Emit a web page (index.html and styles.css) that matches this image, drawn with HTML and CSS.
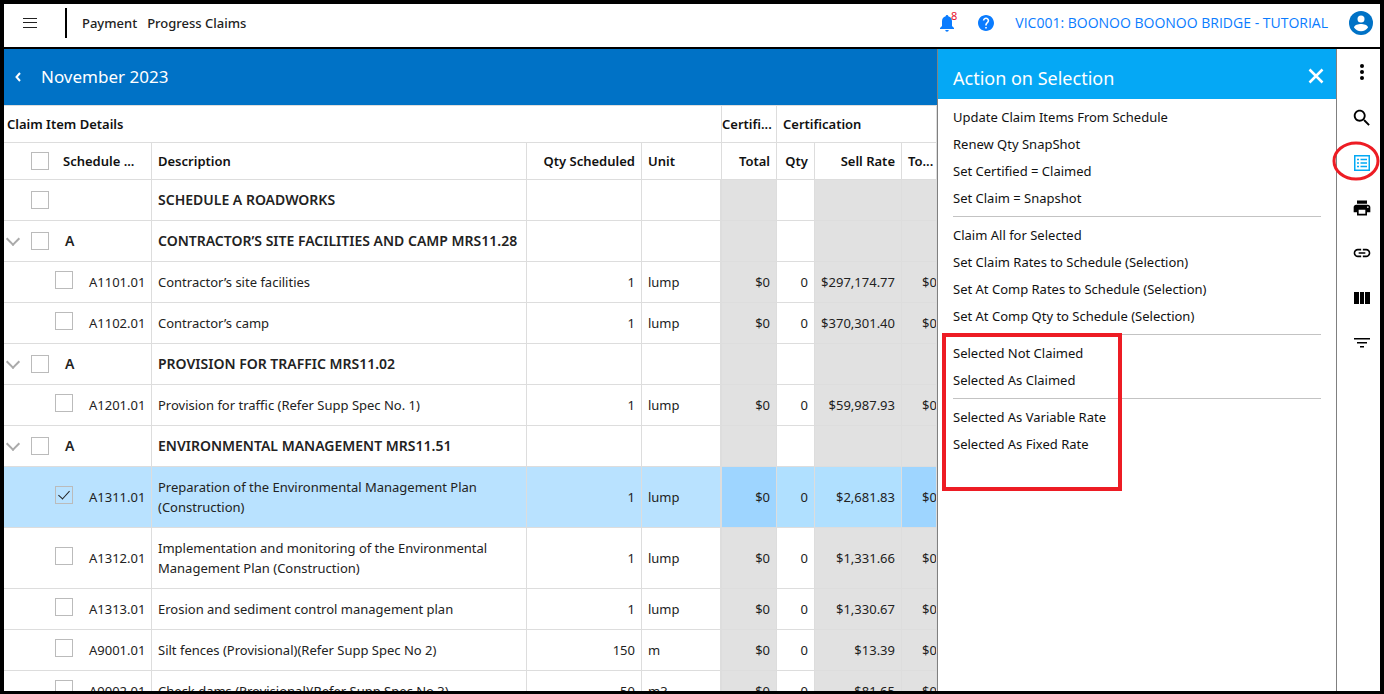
FILE: index.html
```html
<!DOCTYPE html>
<html lang="en">
<head>
  <meta charset="UTF-8" />
  <meta name="viewport" content="width=device-width, initial-scale=1.0" />
  <title>Progress Claims</title>
  <link rel="stylesheet" href="styles.css">
</head>
<body>
  <header class="topbar">
    <button class="icon-btn menu-btn" aria-label="Menu">
      <svg width="14" height="10" viewBox="0 0 14 10" stroke="#222" stroke-width="1"><path d="M0 .5h14M0 4.500h14M0 9.500h14"/></svg>
    </button>
    <nav class="crumbs">
      <a href="#">Payment</a>
      <a href="#">Progress Claims</a>
    </nav>
    <div class="top-right">
      <button class="icon-btn bell" aria-label="Notifications">
        <svg width="16" height="17" viewBox="0 0 16 17" fill="#0a7cff"><path d="M8 0c.9 0 1.300.6 1.300 1.300C11.700 1.900 13 3.900 13 6.300V11l2 2v1H1v-1l2-2V6.300c0-2.400 1.300-4.400 3.700-5C6.700.6 7.100 0 8 0zM6.300 15h3.400c0 1-.7 1.700-1.700 1.700S6.300 16 6.300 15z"/></svg>
        <span class="badge">8</span>
      </button>
      <button class="icon-btn" aria-label="Help">
        <svg width="16" height="16" viewBox="2 2 20 20" fill="#0a7cff"><path d="M12 2C6.480 2 2 6.480 2 12s4.480 10 10 10 10-4.480 10-10S17.520 2 12 2zm1 17h-2v-2h2v2zm2.070-7.750l-.9.920C13.450 12.900 13 13.500 13 15h-2v-.5c0-1.100.45-2.100 1.170-2.830l1.240-1.260c.37-.36.59-.86.59-1.410 0-1.100-.9-2-2-2s-2 .9-2 2H8c0-2.210 1.790-4 4-4s4 1.790 4 4c0 .88-.36 1.680-.93 2.250z"/></svg>
      </button>
      <a class="project" href="#">VIC001: BOONOO BOONOO BRIDGE - TUTORIAL</a>
      <button class="icon-btn" aria-label="Account">
        <svg width="24" height="24" viewBox="0 0 24 24"><circle cx="12" cy="12" r="12" fill="#0072c6"/><circle cx="12" cy="8" r="3.500" fill="#fff"/><path d="M5 16.500c0-2.500 4.600-3.500 7-3.500s7 1 7 3.500c-1.500 2.300-4 3.700-7 3.700s-5.500-1.400-7-3.700z" fill="#fff"/></svg>
      </button>
    </div>
  </header>

  <div class="layout">
    <main class="claims">
      <div class="period">
        <button class="icon-btn" aria-label="Back">
          <svg width="6" height="10" viewBox="0 0 6 10" fill="none" stroke="#fff" stroke-width="2"><path d="M5 1L1.500 5 5 9"/></svg>
        </button>
        <h1>November 2023</h1>
      </div>

      <table class="grid">
        <colgroup>
          <col class="c-code"><col><col class="c-sched"><col class="c-unit"><col class="c-total"><col class="c-qty"><col class="c-rate"><col class="c-last">
        </colgroup>
        <thead>
          <tr class="bands">
            <th colspan="4">Claim Item Details</th>
            <th class="num cut">Certifi...</th>
            <th colspan="3">Certification</th>
          </tr>
          <tr>
            <th><div class="node"><input type="checkbox" aria-label="Select all"><span class="sched">Schedule ...</span></div></th>
            <th>Description</th>
            <th class="num">Qty Scheduled</th>
            <th>Unit</th>
            <th class="num">Total</th>
            <th class="num">Qty</th>
            <th class="num">Sell Rate</th>
            <th class="last">To...</th>
          </tr>
        </thead>
        <tbody>
          <tr class="group">
            <td><div class="node"><input type="checkbox" aria-label="Select Schedule A"></div></td>
            <td>SCHEDULE A ROADWORKS</td><td></td><td></td><td></td><td></td><td></td><td></td>
          </tr>
          <tr class="group">
            <td><div class="node open"><input type="checkbox" id="g1"><label for="g1">A</label></div></td>
            <td>CONTRACTOR’S SITE FACILITIES AND CAMP MRS11.28</td><td></td><td></td><td></td><td></td><td></td><td></td>
          </tr>
          <tr>
            <td><div class="node leaf"><input type="checkbox" id="i1"><label for="i1">A1101.01</label></div></td>
            <td>Contractor’s site facilities</td><td>1</td><td>lump</td><td>$0</td><td>0</td><td>$297,174.77</td><td>$0</td>
          </tr>
          <tr>
            <td><div class="node leaf"><input type="checkbox" id="i2"><label for="i2">A1102.01</label></div></td>
            <td>Contractor’s camp</td><td>1</td><td>lump</td><td>$0</td><td>0</td><td>$370,301.40</td><td>$0</td>
          </tr>
          <tr class="group">
            <td><div class="node open"><input type="checkbox" id="g2"><label for="g2">A</label></div></td>
            <td>PROVISION FOR TRAFFIC MRS11.02</td><td></td><td></td><td></td><td></td><td></td><td></td>
          </tr>
          <tr>
            <td><div class="node leaf"><input type="checkbox" id="i3"><label for="i3">A1201.01</label></div></td>
            <td>Provision for traffic (Refer Supp Spec No. 1)</td><td>1</td><td>lump</td><td>$0</td><td>0</td><td>$59,987.93</td><td>$0</td>
          </tr>
          <tr class="group">
            <td><div class="node open"><input type="checkbox" id="g3"><label for="g3">A</label></div></td>
            <td>ENVIRONMENTAL MANAGEMENT MRS11.51</td><td></td><td></td><td></td><td></td><td></td><td></td>
          </tr>
          <tr class="selected">
            <td><div class="node leaf"><input type="checkbox" id="i4" checked><label for="i4">A1311.01</label></div></td>
            <td>Preparation of the Environmental Management Plan (Construction)</td><td>1</td><td>lump</td><td>$0</td><td>0</td><td>$2,681.83</td><td>$0</td>
          </tr>
          <tr>
            <td><div class="node leaf"><input type="checkbox" id="i5"><label for="i5">A1312.01</label></div></td>
            <td>Implementation and monitoring of the Environmental Management Plan (Construction)</td><td>1</td><td>lump</td><td>$0</td><td>0</td><td>$1,331.66</td><td>$0</td>
          </tr>
          <tr>
            <td><div class="node leaf"><input type="checkbox" id="i6"><label for="i6">A1313.01</label></div></td>
            <td>Erosion and sediment control management plan</td><td>1</td><td>lump</td><td>$0</td><td>0</td><td>$1,330.67</td><td>$0</td>
          </tr>
          <tr>
            <td><div class="node leaf"><input type="checkbox" id="i7"><label for="i7">A9001.01</label></div></td>
            <td>Silt fences (Provisional)(Refer Supp Spec No 2)</td><td>150</td><td>m</td><td>$0</td><td>0</td><td>$13.39</td><td>$0</td>
          </tr>
          <tr>
            <td><div class="node leaf"><input type="checkbox" id="i8"><label for="i8">A9002.01</label></div></td>
            <td>Check dams (Provisional)(Refer Supp Spec No 3)</td><td>50</td><td>m3</td><td>$0</td><td>0</td><td>$81.65</td><td>$0</td>
          </tr>
        </tbody>
      </table>
    </main>

    <aside class="panel">
      <div class="panel-head">
        <h2>Action on Selection</h2>
        <button class="icon-btn" aria-label="Close">
          <svg width="16" height="16" viewBox="0 0 16 16" stroke="#fff" stroke-width="2.500"><path d="M1.500 1.500l13 13M14.500 1.500l-13 13"/></svg>
        </button>
      </div>
      <div class="actions">
        <div class="action-group">
          <button>Update Claim Items From Schedule</button>
          <button>Renew Qty SnapShot</button>
          <button>Set Certified = Claimed</button>
          <button>Set Claim = Snapshot</button>
        </div>
        <div class="action-group">
          <button>Claim All for Selected</button>
          <button>Set Claim Rates to Schedule (Selection)</button>
          <button>Set At Comp Rates to Schedule (Selection)</button>
          <button>Set At Comp Qty to Schedule (Selection)</button>
        </div>
        <div class="action-group">
          <button>Selected Not Claimed</button>
          <button>Selected As Claimed</button>
        </div>
        <div class="action-group">
          <button>Selected As Variable Rate</button>
          <button>Selected As Fixed Rate</button>
        </div>
        <div class="mark-box"></div>
      </div>
    </aside>

    <div class="rail">
      <button class="icon-btn" aria-label="More">
        <svg width="24" height="24" viewBox="0 0 24 24"><circle cx="12" cy="6" r="2"/><circle cx="12" cy="12" r="2"/><circle cx="12" cy="18" r="2"/></svg>
      </button>
      <button class="icon-btn" aria-label="Search">
        <svg width="22" height="22" viewBox="0 0 24 24"><path d="M15.500 14h-.79l-.28-.27C15.410 12.590 16 11.110 16 9.500 16 5.910 13.090 3 9.500 3S3 5.910 3 9.500 5.910 16 9.500 16c1.610 0 3.090-.59 4.230-1.570l.27.28v.79l5 4.990L20.490 19l-4.990-5zm-6 0C7.010 14 5 11.990 5 9.500S7.010 5 9.500 5 14 7.010 14 9.500 11.990 14 9.500 14z"/></svg>
      </button>
      <button class="icon-btn marked" aria-label="Actions">
        <svg width="16" height="16" viewBox="0 0 16 16" fill="none" stroke="#03a9f4"><path d="M.75.75h14.500v14.500H.75z" stroke-width="1.500"/><path d="M3 4.500h2M6.500 4.500H13M3 8h2M6.500 8H13M3 11.500h2M6.500 11.500H13" stroke-width="1.500"/></svg>
        <svg class="mark-ring" width="48" height="40" viewBox="0 0 48 40" fill="none" stroke="#ed1c24" stroke-width="3"><ellipse cx="24" cy="20" rx="22" ry="18"/></svg>
      </button>
      <button class="icon-btn" aria-label="Print">
        <svg width="20" height="20" viewBox="0 0 24 24"><path d="M19 8H5c-1.660 0-3 1.340-3 3v6h4v4h12v-4h4v-6c0-1.660-1.340-3-3-3zm-3 11H8v-5h8v5zm3-7c-.55 0-1-.45-1-1s.45-1 1-1 1 .45 1 1-.45 1-1 1zm-1-9H6v4h12V3z"/></svg>
      </button>
      <button class="icon-btn" aria-label="Link">
        <svg width="20" height="20" viewBox="0 0 24 24"><path d="M3.900 12c0-1.710 1.390-3.100 3.100-3.100h4V7H7c-2.760 0-5 2.240-5 5s2.240 5 5 5h4v-1.900H7c-1.710 0-3.100-1.390-3.100-3.100zM8 13h8v-2H8v2zm9-6h-4v1.900h4c1.710 0 3.100 1.390 3.100 3.100s-1.390 3.100-3.100 3.100h-4V17h4c2.760 0 5-2.240 5-5s-2.240-5-5-5z"/></svg>
      </button>
      <button class="icon-btn" aria-label="Columns">
        <svg width="16" height="12" viewBox="0 0 16 12"><path d="M0 0h5v12H0zM6 0h4v12H6zM11 0h5v12h-5z"/></svg>
      </button>
      <button class="icon-btn" aria-label="Filter">
        <svg width="16" height="10" viewBox="0 0 16 10"><path d="M0 0h16v1.500H0zM3 4h10v1.500H3zM6 8h4v1.500H6z"/></svg>
      </button>
    </div>
  </div>
</body>
</html>
```
FILE: styles.css
```css
* {
  box-sizing: border-box;
}
body {
  margin: 0;
  height: 100vh;
  display: flex;
  flex-direction: column;
  overflow: hidden;
  border: 4px solid #000;
  border-bottom-width: 3px;
  background: #fff;
  color: #222;
  font-family: "Noto Sans", "Open Sans", sans-serif;
  font-size: 13px;
  line-height: 20px;
}
h1, h2 {
  margin: 0;
  font-weight: 400;
  color: #fff;
}
h1 {
  font-size: 17px;
}
h2 {
  font-size: 18px;
}
a {
  text-decoration: none;
  color: inherit;
}
button {
  padding: 0;
  border: none;
  background: none;
  font: inherit;
  color: inherit;
  cursor: pointer;
}
svg {
  display: block;
}
.icon-btn {
  position: relative;
  display: flex;
  align-items: center;
  justify-content: center;
}

/* top bar */
.topbar {
  flex: none;
  display: flex;
  align-items: center;
  height: 45px;
  padding: 0 7px 5px 0;
  border-bottom: 2px solid #000;
  font-weight: 500;
}
.menu-btn {
  width: 52px;
  height: 30px;
}
.crumbs {
  display: flex;
  gap: 10px;
  margin-left: 9px;
  padding: 5px 0 5px 15px;
  border-left: 2px solid #000;
}
.top-right {
  display: flex;
  align-items: center;
  gap: 21px;
  margin-left: auto;
}
.bell {
  margin-right: 2px;
}
.badge {
  position: absolute;
  top: -5px;
  right: -2px;
  color: #e8112d;
  font-size: 11px;
  font-weight: 400;
  line-height: 12px;
}
.project {
  color: #0a7cff;
  font-family: "Open Sans", "Noto Sans", sans-serif;
  font-size: 14px;
  font-weight: 400;
}

.layout {
  flex: 1;
  display: flex;
  min-height: 0;
}
.claims {
  flex: 1;
  min-width: 0;
  overflow: hidden;
}
.period {
  display: flex;
  align-items: center;
  gap: 20px;
  height: 56px;
  padding-left: 11px;
  background: #0072c6;
}

/* claim grid */
.grid {
  width: 100%;
  table-layout: fixed;
  border-collapse: separate;
  border-spacing: 0;
  border-top: 1px solid #ddd;
}
.c-code { width: 148px; }
.c-sched { width: 115px; }
.c-unit { width: 80px; }
.c-total { width: 55px; }
.c-qty { width: 38px; }
.c-rate { width: 87px; }
.c-last { width: 35px; }
.grid th,
.grid td {
  padding: 10px 6px;
  border-right: 1px solid #ddd;
  border-bottom: 1px solid #ddd;
  text-align: left;
}
.grid th {
  padding: 8px 6px;
  color: #111;
  font-weight: 600;
  white-space: nowrap;
  overflow: hidden;
}
.grid .bands th:first-child {
  padding-left: 3px;
}
.grid th.num {
  text-align: right;
}
.grid th.cut {
  padding-left: 0;
}
.grid th.last {
  padding-right: 0;
}
.grid td:nth-child(4) {
  border-right-width: 2px;
}
.grid td:nth-child(3),
.grid td:nth-child(5),
.grid td:nth-child(6),
.grid td:nth-child(7) {
  text-align: right;
}
.grid td:nth-child(5),
.grid td:nth-child(7),
.grid td:nth-child(8) {
  background: #e1e1e1;
}
.grid td:nth-child(8) {
  padding-left: 20px;
  padding-right: 0;
  overflow: hidden;
}
.grid th:first-child,
.grid td:first-child {
  padding-left: 3px;
}
.group td {
  font-size: 14px;
  font-weight: 600;
}
.grid .selected td {
  background: #b9e2ff;
}
.grid .selected td:nth-child(6),
.grid .selected td:nth-child(7) {
  background: #b0e0ff;
}
.grid .selected td:nth-child(5),
.grid .selected td:nth-child(8) {
  background: #9ed5ff;
}

.node {
  display: flex;
  align-items: center;
  height: 20px;
  padding-left: 24px;
  gap: 16px;
}
.node .sched {
  margin-left: -2px;
}
.node.open::before {
  content: "";
  width: 8px;
  height: 8px;
  margin: -5px -3px 0 -21px;
  border: solid #aaa;
  border-width: 0 2px 2px 0;
  transform: rotate(45deg);
}
.node.open {
  padding-left: 22px;
}
.node.leaf {
  padding-left: 48px;
}
.node.leaf input {
  margin-bottom: 4px;
}
.node input {
  appearance: none;
  flex: none;
  display: grid;
  place-items: center;
  width: 18px;
  height: 18px;
  margin: 0;
  border: 1px solid #bbb;
}
.node input:checked::before {
  content: "";
  width: 5px;
  height: 10px;
  margin-bottom: 3px;
  border: solid #222;
  border-width: 0 1px 1px 0;
  transform: rotate(42deg);
}

/* action panel */
.panel {
  flex: none;
  width: 400px;
  border: solid #808080;
  border-width: 0 1px;
}
.panel-head {
  display: flex;
  align-items: center;
  justify-content: space-between;
  height: 50px;
  padding: 8px 12px 0 15px;
  background: #05a8f5;
}
.panel-head .icon-btn {
  margin-bottom: 4px;
}
.actions {
  position: relative;
  padding: 0 15px;
  color: #111;
}
.action-group {
  display: flex;
  flex-direction: column;
  align-items: flex-start;
  padding: 4px 0 5px;
}
.action-group + .action-group {
  border-top: 1px solid #c3c3c3;
}
.action-group button {
  height: 27px;
}
.mark-box {
  position: absolute;
  top: 234px;
  left: 4px;
  width: 180px;
  height: 158px;
  border: 4px solid #ed1c24;
  pointer-events: none;
}

.rail {
  flex: none;
  display: flex;
  flex-direction: column;
  width: 43px;
  padding: 0 0 0 6px;
}
.rail .icon-btn {
  height: 45px;
}
.rail .icon-btn:first-child {
  height: 46px;
}
.mark-ring {
  position: absolute;
  top: 1px;
  left: -11px;
}
```
